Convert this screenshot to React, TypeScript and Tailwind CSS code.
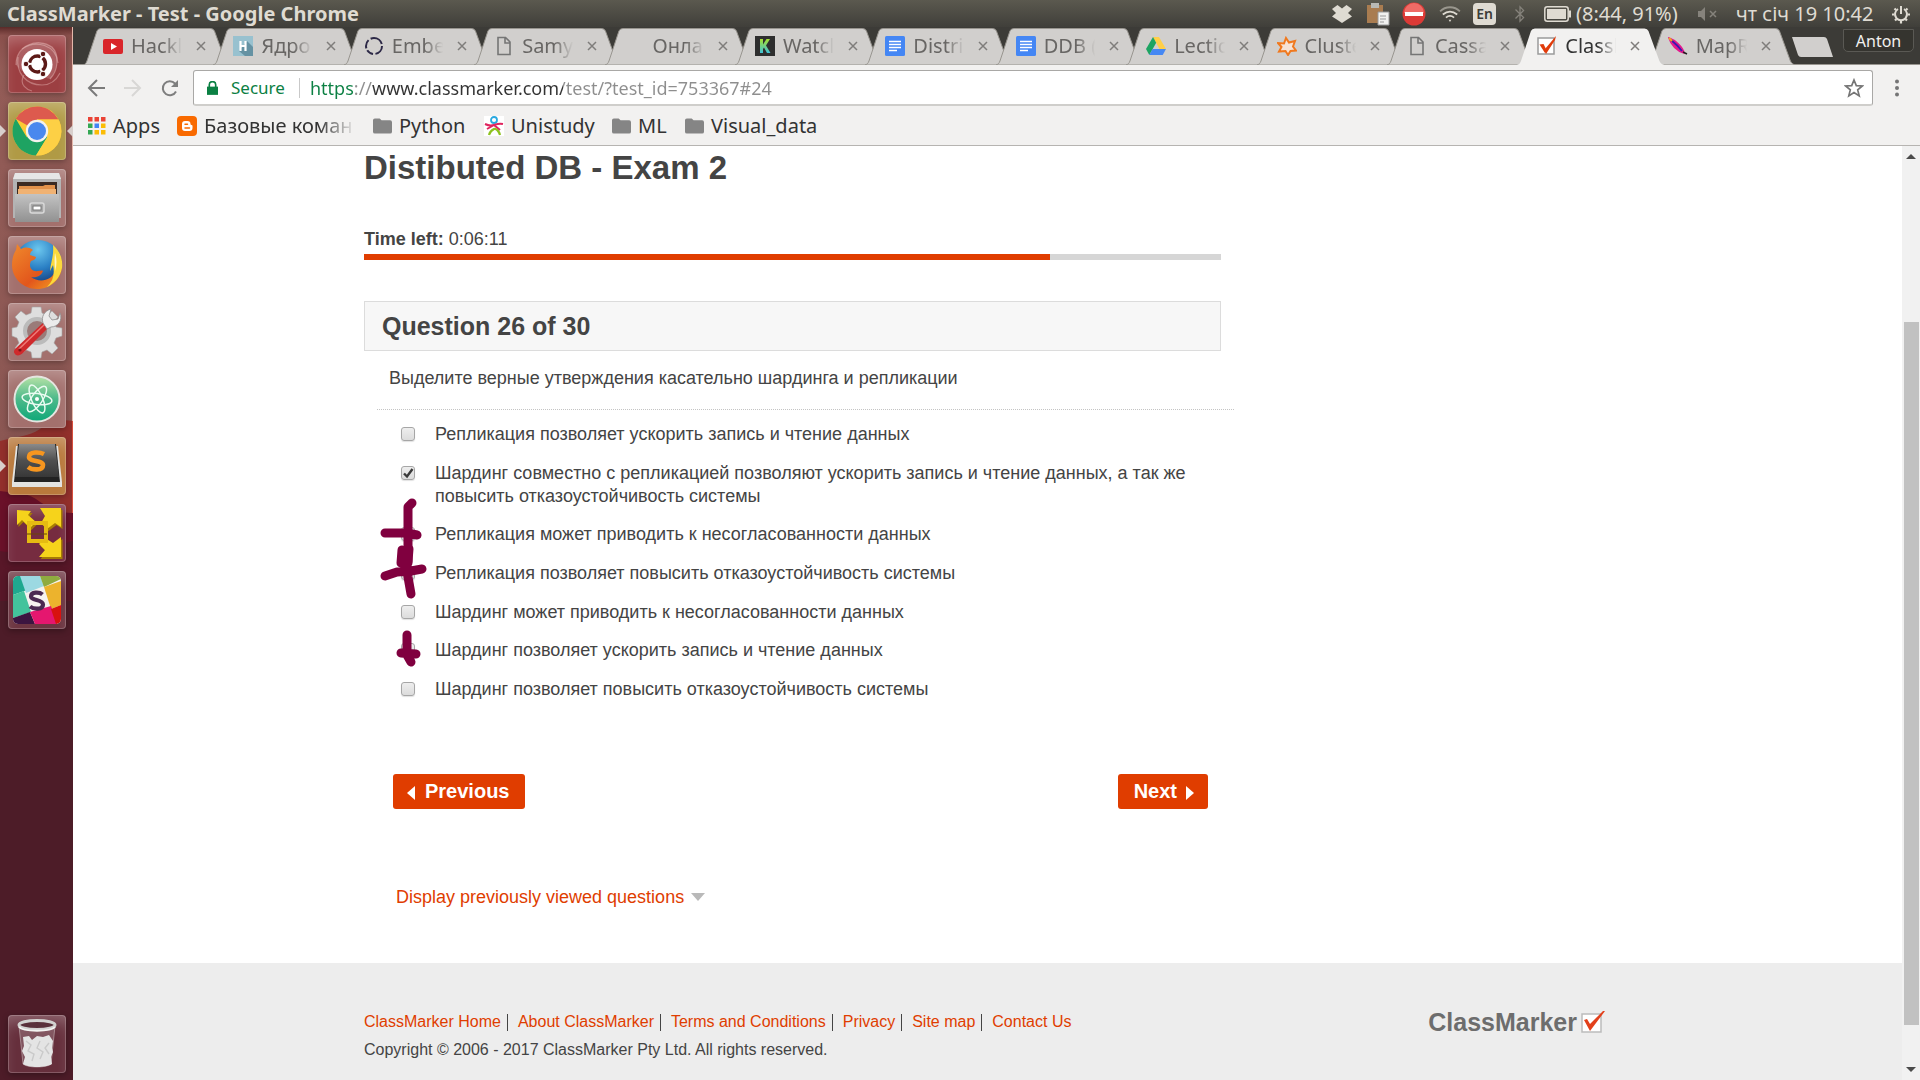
import React, { useState } from "react";

/* ---------- Launcher icons (58-unit canvas) ---------- */

const UbuntuIcon = () => (
  <svg viewBox="0 0 58 58" className="size-full">
    <g fill="none" stroke="#e9b9b5" strokeOpacity=".45" strokeWidth="1.2">
      <path d="M8 30C8 10 30 2 44 12c8 8 6 24-2 32" />
      <path d="M14 14c14-10 34-4 36 14" />
      <path d="M10 22c-2 16 8 28 24 28 8 0 14-4 18-12" />
      <path d="M16 40C10 50 20 55 24 56" />
    </g>
    <path d="M8 30C8 10 30 2 44 12c8 8 6 24-2 32L14 36z" fill="#fff" fillOpacity=".16" />
    <circle cx="29" cy="29.500" r="15.500" fill="#fff" />
    <circle cx="29.500" cy="29" r="8" fill="none" stroke="#5c1a17" strokeWidth="3.400" strokeDasharray="14.500 2.250" strokeDashoffset="-9.500" />
    <g fill="#5c1a17" stroke="#fff" strokeWidth="1">
      <circle cx="18" cy="29" r="2.800" />
      <circle cx="35" cy="19" r="2.800" />
      <circle cx="35" cy="39" r="2.800" />
    </g>
  </svg>
);

const ChromeIcon = () => (
  <svg viewBox="0 0 58 58" className="size-full">
    <circle cx="29" cy="29" r="24.500" fill="#fbc935" />
    <path d="M29 29 7.800 16.700A24.500 24.500 0 0 1 50.500 17.500H29z" fill="#dd5a4e" />
    <path d="M29 29 18.600 35 7.800 16.700A24.500 24.500 0 0 0 28 53.500L39.400 35z" fill="#1ea362" />
    <path d="M29 17.500h21.500A24.500 24.500 0 0 1 28 53.500L39.400 35z" fill="#fdd045" />
    <circle cx="29" cy="29" r="11.200" fill="#f4f2ee" />
    <circle cx="29" cy="29" r="9" fill="#4a88ee" />
  </svg>
);

const FilesIcon = () => (
  <svg viewBox="0 0 58 58" className="size-full">
    <defs>
      <linearGradient id="cab" x1="0" y1="0" x2="0" y2="1">
        <stop offset="0" stopColor="#c3c3c3" />
        <stop offset="1" stopColor="#919191" />
      </linearGradient>
    </defs>
    <path d="M7 4h44l2 6v39H5V10z" fill="#b4b4b4" />
    <path d="M7 4h44l2 6H5z" fill="#e6e6e6" />
    <path d="M9 13h40v12H9z" fill="#3b2a22" />
    <path d="M11 17h24l2-1h10v9H11z" fill="#e2924b" />
    <path d="M10 20h38v5H10z" fill="#f0b273" />
    <path d="M7 25h44v28H7z" fill="url(#cab)" />
    <rect x="22" y="34" width="14" height="10" rx="2" fill="#a9a9a9" stroke="#d9d9d9" strokeWidth="1.500" />
    <rect x="25" y="37" width="8" height="4" fill="#fff" stroke="#777" />
  </svg>
);

const FirefoxIcon = () => (
  <svg viewBox="0 0 58 58" className="size-full">
    <defs>
      <radialGradient id="globe" cx=".5" cy=".2" r=".8">
        <stop offset="0" stopColor="#6cc7ee" />
        <stop offset=".5" stopColor="#2a7fc4" />
        <stop offset="1" stopColor="#12306e" />
      </radialGradient>
      <linearGradient id="fox" x1="0" y1="0" x2="1" y2="1">
        <stop offset="0" stopColor="#f08a2c" />
        <stop offset=".6" stopColor="#e2561c" />
        <stop offset="1" stopColor="#f5a623" />
      </linearGradient>
    </defs>
    <circle cx="30" cy="28" r="24" fill="url(#globe)" />
    <path d="M46 11c6 6 8 12 8 18 0 14-11 24-25 24S4 42 4 29c0-7 2-12 4-15l1-6 4 5c4-2 8-2 12 1-2 1-3 3-3 5l6 2c0 2-2 3-5 4-3 6 1 11 7 10 2 0 4-1 5 0-2 6-9 7-12 6 8 6 21 4 24-6 1-8-1-15-1-24z" fill="url(#fox)" />
    <path d="M45 9c7 6 10 14 9 23-2 9-7 15-15 19 6-6 8-13 6-22l-3 6c1-10 4-15 3-26z" fill="#fbd93d" />
    <path d="M47 17c2 6 2 12 0 18 0-6-1-9 0-18z" fill="#fff8c9" />
  </svg>
);

const SettingsIcon = () => (
  <svg viewBox="0 0 58 58" className="size-full">
    <g fill="#dedede" stroke="#a5a5a5" strokeWidth=".6">
      <path d="M24 4h9l1 6 5 2 5-4 6 6-4 5 2 5 6 1v8l-6 2-2 5 4 5-6 6-5-4-5 2-1 6h-9l-1-6-5-2-5 4-6-6 4-5-2-5-5-2v-8l5-1 2-5-4-5 6-6 5 4 5-2z" />
    </g>
    <circle cx="29" cy="28" r="12" fill="#9a7b79" stroke="#bbb" strokeWidth="4" />
    <path d="M8 45 36 19l5 5-26 26c-3 3-7 3-8 1-2-2-1-4 1-6z" fill="#cf2a2c" />
    <path d="m11 46 26-25" stroke="#ef7b78" strokeWidth="1.500" />
    <path d="M35 20c-2-6 1-12 8-14l-2 7 3 4 6-1 2-6c3 7-2 14-9 14l-4 2z" fill="#ececec" stroke="#8d8d8d" strokeWidth=".8" />
    <circle cx="12" cy="47" r="1.600" fill="#7d1517" />
  </svg>
);

const AtomIcon = () => (
  <svg viewBox="0 0 58 58" className="size-full">
    <defs>
      <linearGradient id="atm" x1="0" y1="0" x2="0" y2="1">
        <stop offset="0" stopColor="#b5e2a6" />
        <stop offset=".5" stopColor="#4cb98a" />
        <stop offset="1" stopColor="#0ea878" />
      </linearGradient>
    </defs>
    <circle cx="29" cy="29" r="22.500" fill="url(#atm)" stroke="#e5e5e0" strokeWidth="2" />
    <g fill="none" stroke="#e9fbf1" strokeWidth="1.500">
      <ellipse cx="29" cy="29" rx="15" ry="5.500" transform="rotate(8 29 29)" />
      <ellipse cx="29" cy="29" rx="15" ry="5.500" transform="rotate(66 29 29)" />
      <ellipse cx="29" cy="29" rx="15" ry="5.500" transform="rotate(124 29 29)" />
    </g>
    <circle cx="29" cy="29" r="2" fill="#fff" />
  </svg>
);

const SublimeIcon = () => (
  <svg viewBox="0 0 58 58" className="size-full">
    <defs>
      <linearGradient id="subl" x1="0" y1="0" x2="0" y2="1">
        <stop offset="0" stopColor="#8a8a8a" />
        <stop offset=".5" stopColor="#4f4f4f" />
        <stop offset="1" stopColor="#383838" />
      </linearGradient>
    </defs>
    <path d="M8 9h42l4 36v5H4v-5z" fill="#e3e3e1" />
    <path d="M10 7h38l4 38H6z" fill="#222" />
    <path d="M11 7h36l4 33H7z" fill="url(#subl)" />
    <path d="M36 17c-4-2-15-3-15 3 0 5 14 3 14 8 0 6-11 5-15 2" fill="none" stroke="#f7961f" strokeWidth="4.600" />
  </svg>
);

const VmwareIcon = () => (
  <svg viewBox="0 0 58 58" className="size-full">
    <g fill="#a57c04" transform="translate(1.500 2)">
      <path d="M9 6l14 1-3 4 8 7-6 6-8-8-5 5z" />
      <path d="M32 4l21 0v19l-6-4-8 6-6-6 4-7z" />
      <path d="M53 33v20H31l6-7-6-6 6-6 8 5z" />
    </g>
    <g fill="#f6d31b">
      <path d="M9 6l14 1-3 4 8 7-6 6-8-8-5 5z" />
      <path d="M32 4l21 0v19l-6-4-8 6-6-6 4-7z" />
      <path d="M53 33v20H31l6-7-6-6 6-6 8 5z" />
    </g>
    <path d="M21 19h17v18H21z" fill="none" stroke="#e5bb12" strokeWidth="4" />
    <path d="M19 30h20" stroke="#6b4708" strokeWidth="1.200" />
  </svg>
);

const SlackIcon = () => (
  <svg viewBox="0 0 58 58" className="size-full">
    <defs>
      <clipPath id="slk">
        <rect x="5" y="5" width="48" height="48" rx="5" />
      </clipPath>
    </defs>
    <g clipPath="url(#slk)">
      <path d="M5 5h48v48H5z" fill="#f5f2ef" />
      <path d="M5 5h9l5 14L5 24z" fill="#1fa88f" />
      <path d="M12 5h20l4 10-18 7z" fill="#9cd9e2" />
      <path d="M32 5h21v3l-17 8z" fill="#8fab3f" />
      <path d="M36 16l17-6v24l-10 4z" fill="#ecb32d" />
      <path d="M5 24l11-4 7 21-18 6z" fill="#43c39c" />
      <path d="M5 47l17-6 5 12H5z" fill="#3c1540" />
      <path d="M22 41l21-6 6 18H27z" fill="#e5176f" />
      <path d="M43 38l10-4v19h-5z" fill="#d8120f" />
    </g>
    <path d="M34.500 23.500c-3-2.500-11.500-3-11.500 2 0 4.500 12 2.500 12 8 0 5.500-9.500 5-13 2" fill="none" stroke="#4b2a52" strokeWidth="4.200" />
  </svg>
);

const TrashIcon = () => (
  <svg viewBox="0 0 58 58" className="size-full">
    <path d="M11 11h36l-4 38c-4 4-24 4-28 0z" fill="#fff" fillOpacity=".18" stroke="#d7c9cc" strokeOpacity=".5" />
    <path d="m15 22 6-1 3 4 5-4 6 1 6-2 4 6-1 7 1 4-2 5 1 7c-6 4-24 4-29 0l2-7-3-6 2-5z" fill="#e4e4e4" />
    <path d="m18 26 5 4-3 6 6 3-2 7m8-20-3 7 6 4-3 7m9-16-4 5 4 6" fill="none" stroke="#cacaca" strokeWidth="1.400" />
    <ellipse cx="29" cy="10" rx="18" ry="4.500" fill="#59303a" stroke="#d2d2d0" strokeWidth="3" />
    <path d="M11 12c4 5 32 5 36 0" fill="none" stroke="#f4f4f2" strokeWidth="2" />
  </svg>
);

/* ---------- Favicons ---------- */

const Fav = ({ children }: { children: React.ReactNode }) => (
  <svg viewBox="0 0 20 20" className="size-5 shrink-0">
    {children}
  </svg>
);

const CheckFav = () => (
  <Fav>
    <rect x="1" y="2" width="16" height="16" fill="#fff" stroke="#9b9b9b" strokeWidth="1.500" />
    <path d="M4 9l4 4L19 0l-1 4-9 14z" fill="#e13c0b" />
    <path d="M2.500 8.500l4-.5 2.500 5-1 4z" fill="#e13c0b" />
  </Fav>
);
const YouTubeFav = () => (
  <Fav>
    <rect y="3" width="20" height="15" rx="2" fill="#d9252a" />
    <path d="M8 7l6 3.500L8 14z" fill="#fff" />
  </Fav>
);
const HabrFav = () => (
  <Fav>
    <path d="M0 0h20v20H0z" fill="#98c1cf" />
    <path d="m14 5 6 6v9H12l-6-5z" fill="#6592a3" />
    <path d="M7.500 5v10M12.500 5v10M7.500 10h5" stroke="#fff" strokeWidth="2.200" />
  </Fav>
);
const RingFav = () => (
  <Fav>
    <circle cx="10" cy="10" r="8" fill="none" stroke="#2c2846" strokeWidth="2" strokeDasharray="11 2.500 7 2 9 2.500 14 2.200" />
  </Fav>
);
const PageFav = () => (
  <Fav>
    <path d="M4 1.500h7.500L16 6v12.500H4zM11 2v5h5" fill="none" stroke="#757575" strokeWidth="1.600" />
  </Fav>
);
const BlankFav = () => <Fav>{null}</Fav>;
const KFav = () => (
  <Fav>
    <defs>
      <linearGradient id="kf" x1="0" y1="0" x2="0" y2="1">
        <stop offset="0" stopColor="#a5e12e" />
        <stop offset="1" stopColor="#3fc1d8" />
      </linearGradient>
    </defs>
    <path d="M0 0h20v20H0z" fill="#2e2e2e" />
    <path d="M5 3h3v5.500L11.500 3H15l-4 6.500L15.500 17H12l-3-5.500-1 1.500v4H5z" fill="url(#kf)" />
  </Fav>
);
const DocsFav = () => (
  <Fav>
    <rect width="20" height="20" rx="1.500" fill="#4486f4" />
    <path d="M4 5.500h12M4 8.500h12M4 11.500h12M4 14.500h8" stroke="#fff" strokeWidth="1.500" />
  </Fav>
);
const DriveFav = () => (
  <Fav>
    <path d="M7 1h6l7 12h-6.500z" fill="#ffcf48" />
    <path d="M7 1l3.200 5.700L3.300 19 0 13z" fill="#1da462" />
    <path d="M6.500 13H20l-3.300 6H3.300z" fill="#4688f4" />
  </Fav>
);
const StarFav = () => (
  <Fav>
    <path d="M9 2l3 4.500 6-1.500-2 5.500 3 4-5.500.5L11 19l-2.500-4-6.500.5 2.500-4.500L1 7l6 .5z" fill="#f6e3d6" stroke="#f0791f" strokeWidth="2" />
  </Fav>
);
const FeatherFav = () => (
  <Fav>
    <path d="M1 2c5 1 12 7 15 15-6-2-12-8-15-15z" fill="#e5178c" />
    <path d="M1 2c6 2 14 9 15 15C9 15 3 9 1 2z" fill="none" stroke="#e5178c" strokeWidth="1.500" />
    <path d="M3 4c5 4 8 7 11 11" stroke="#3a1ab0" strokeWidth="1.800" />
    <path d="M1 2l3 3" stroke="#f3a51d" strokeWidth="2" />
    <path d="M15 16l4 2" stroke="#222" strokeWidth="1.500" />
  </Fav>
);
const FolderIcon = () => (
  <svg viewBox="0 0 20 16" className="h-4 w-[19px] shrink-0">
    <path d="M0 2a2 2 0 0 1 2-2h5l2 2h9a2 2 0 0 1 2 2v10a2 2 0 0 1-2 2H2a2 2 0 0 1-2-2z" fill="#858585" />
  </svg>
);

type Tab = { name: string; title: string; icon: React.ReactNode; active?: boolean };

const tabs: Tab[] = [
  { name: "t1", title: "Hackl", icon: <YouTubeFav /> },
  { name: "t2", title: "Ядро", icon: <HabrFav /> },
  { name: "t3", title: "Embe", icon: <RingFav /> },
  { name: "t4", title: "Samy", icon: <PageFav /> },
  { name: "t5", title: "Онла", icon: <BlankFav /> },
  { name: "t6", title: "Watcl", icon: <KFav /> },
  { name: "t7", title: "Distri", icon: <DocsFav /> },
  { name: "t8", title: "DDB (", icon: <DocsFav /> },
  { name: "t9", title: "Lectic", icon: <DriveFav /> },
  { name: "t10", title: "Cluste", icon: <StarFav /> },
  { name: "t11", title: "Cassa", icon: <PageFav /> },
  { name: "t12", title: "Classl", icon: <CheckFav />, active: true },
  { name: "t13", title: "MapR", icon: <FeatherFav /> },
];

const TabItem = ({ tab }: { tab: Tab }) => (
  <div className={tab.active ? "relative z-10 min-w-0 flex-1" : "relative min-w-0 flex-1"}>
    <svg viewBox="0 0 148 37" preserveAspectRatio="none" className="absolute left-0 top-0 h-[37px] w-[calc(100%+17px)]">
      <path
        d="M0 37C3 36 3 35 4 33L14 3Q15 .5 18 .5H128Q131 .5 132 3L143 33C144 35 145 36 148 37z"
        fill={tab.active ? "#f2f1f0" : "#d1cfcd"}
        stroke={tab.active ? "none" : "#98958f"}
      />
    </svg>
    <div className="relative flex h-9 items-center pl-5">
      {tab.icon}
      <button
        type="button"
        role="tab"
        aria-selected={!!tab.active}
        className={
          tab.active
            ? "ml-2 w-[54px] overflow-hidden whitespace-nowrap text-left text-xl leading-7 text-[#333] [mask-image:linear-gradient(to_right,#000_60%,transparent_95%)]"
            : "ml-2 w-[54px] overflow-hidden whitespace-nowrap text-left text-xl leading-7 text-[#686664] [mask-image:linear-gradient(to_right,#000_60%,transparent_95%)]"
        }
      >
        {tab.title}
      </button>
      <button type="button" aria-label="Close tab" className="ml-[11px] shrink-0">
        <svg viewBox="0 0 10 10" className="size-2.5">
          <path d="M1 1l8 8M9 1 1 9" stroke="#7f7d7b" strokeWidth="1.500" />
        </svg>
      </button>
    </div>
  </div>
);

/* ---------- Top system panel ---------- */

const Indicators = () => (
  <div className="flex items-center text-xl leading-6 text-[#dfdbd2]">
    <svg viewBox="0 0 20 18" className="h-[18px] w-5 fill-[#dfdbd2]">
      <path d="M5.500 0 10 3.500 14.500 0 20 4l-4 4 4 3.500-4 2.500-6 4-6-4-4-2.500L4 8 0 4z" />
    </svg>
    <svg viewBox="0 0 24 24" className="ml-3.5 size-6">
      <path d="M1 3h16v18H1z" fill="#a97c50" />
      <path d="M5 1h8v5H5z" fill="#b9b9b5" />
      <path d="M12 10h11v13H12z" fill="#f1f1ef" stroke="#999" />
      <path d="M14 14h6M14 17h6M14 20h4" stroke="#999" />
    </svg>
    <svg viewBox="0 0 24 24" className="ml-3 size-6">
      <circle cx="12" cy="12" r="11.500" fill="#dc3a36" />
      <path d="M2 11a10 10 0 0 1 20 0z" fill="#ef6b66" />
      <path d="M3 10h18v4H3z" fill="#fff" />
    </svg>
    <svg viewBox="0 0 24 20" className="ml-[13px] h-[18px] w-[22px]" fill="none" stroke="#dfdbd2" strokeWidth="2">
      <path d="M1 7c6-6 16-6 22 0" strokeOpacity=".5" />
      <path d="M4 10.500c5-4 11-4 16 0M7.500 14c3-2.500 6-2.500 9 0" />
      <path d="M10.500 16.500h3L12 19z" fill="#dfdbd2" stroke="none" />
    </svg>
    <span className="ml-3 flex h-[22px] w-[23px] items-center justify-center rounded-sm bg-[#dfdbd2] text-sm font-semibold text-[#3c3b37]">En</span>
    <svg viewBox="0 0 12 20" className="ml-[18px] h-[18px] w-3" fill="none" stroke="#86837c" strokeWidth="1.400">
      <path d="M1 5l9 9-4 4V2l4 4-9 9" />
    </svg>
    <svg viewBox="0 0 28 16" className="ml-[18px] h-4 w-7">
      <rect x=".8" y=".8" width="23.400" height="14.400" rx="2.500" fill="none" stroke="#dfdbd2" strokeWidth="1.500" />
      <path d="M3 3h19v10H3z" fill="#dfdbd2" />
      <path d="M25 4.500h2v7h-2z" fill="#dfdbd2" />
    </svg>
    <span className="ml-1 w-[108px] whitespace-nowrap">(8:44, 91%)</span>
    <svg viewBox="0 0 20 14" className="ml-3.5 h-3.5 w-5">
      <path d="M0 4h3l4-4v14l-4-4H0z" fill="#86837c" />
      <path d="M12 4l6 6M18 4l-6 6" stroke="#86837c" strokeWidth="1.500" />
    </svg>
    <time className="ml-[18px] w-[141px] whitespace-nowrap">чт січ 19 10:42</time>
    <svg viewBox="0 0 20 20" className="ml-3.5 mr-[9px] size-5" fill="none" stroke="#dfdbd2">
      <path d="M7 5a6 6 0 1 0 6 0M10 2v8" strokeWidth="2" />
      <path d="M3.500 4.500l1.500 1.500M16.500 4.500 15 6M1 10.500h2.500M16.500 10.500H19M4 16.500 5.500 15M16 16.500 14.500 15M10 17v2.500" strokeWidth="2.200" />
    </svg>
  </div>
);

/* ---------- Launcher ---------- */

const launcher = [
  { label: "Dash", icon: <UbuntuIcon />, tile: "bg-[#9c3f42]" },
  { label: "Google Chrome", icon: <ChromeIcon />, tile: "bg-[#b09a45]", running: true, focused: true },
  { label: "Files", icon: <FilesIcon />, tile: "bg-[#a3706d]" },
  { label: "Firefox", icon: <FirefoxIcon />, tile: "bg-[#a3706d]" },
  { label: "System Settings", icon: <SettingsIcon />, tile: "bg-[#a3706d]" },
  { label: "Atom", icon: <AtomIcon />, tile: "bg-[#a3706d]" },
  { label: "Sublime Text", icon: <SublimeIcon />, tile: "bg-[#b9793c]", running: true },
  { label: "VMware", icon: <VmwareIcon />, tile: "bg-[#762c40]" },
  { label: "Slack", icon: <SlackIcon />, tile: "bg-[#6d3642]" },
];

const Tile = ({ label, icon, tile, running, focused }: { label: string; icon: React.ReactNode; tile: string; running?: boolean; focused?: boolean }) => (
  <div className="relative flex justify-center">
    {running && <span className="absolute left-0 top-[23px] border-y-[6px] border-l-[6px] border-y-transparent border-l-[#d8cfcc]" />}
    <button type="button" aria-label={label} className={`size-[58px] overflow-hidden rounded-[4px] shadow-[inset_0_0_0_1px_rgba(255,255,255,0.2),inset_0_12px_16px_-6px_rgba(255,255,255,0.28),0_2px_6px_rgba(0,0,0,0.3)] ${tile}`}>
      {icon}
    </button>
    {focused && <span className="absolute right-0 top-[23px] border-y-[6px] border-r-[6px] border-y-transparent border-r-[#d8cfcc]" />}
  </div>
);

const Launcher = () => (
  <nav aria-label="Launcher" className="relative flex w-[73px] shrink-0 flex-col justify-between bg-[#4d1c28] pb-[7px] pt-2">
    <svg viewBox="0 0 73 1053" preserveAspectRatio="none" className="absolute inset-0 h-full w-full">
      <defs>
        <linearGradient id="wall" x1="0" y1="0" x2="0" y2="1">
          <stop offset="0" stopColor="#5a2a28" />
          <stop offset=".02" stopColor="#8a504c" />
          <stop offset=".1" stopColor="#935c57" />
          <stop offset="1" stopColor="#8b5753" />
        </linearGradient>
      </defs>
      <path d="M0 0h73v420H0z" fill="url(#wall)" />
      <path d="M0 414c14-4 28-4 40-12 12-8 22-10 33-8v100H0z" fill="#93302c" />
      <path d="M0 464c10 2 24 0 36 8 10 8 24 14 37 14v60H0z" fill="#6a1129" />
      <path d="M0 524c18 4 30-6 44-4 12 2 20-4 29-6v60H0z" fill="#581728" />
      <path d="M72.500 0v394" stroke="#e5b8ab" />
      <path d="M72.500 394v92" stroke="#d8503f" />
    </svg>
    <div className="relative flex flex-col gap-[9px]">
      {launcher.map((l) => (
        <Tile key={l.label} {...l} />
      ))}
    </div>
    <Tile label="Trash" icon={<TrashIcon />} tile="bg-[#662f3c]" />
  </nav>
);

/* ---------- Browser chrome ---------- */

const Toolbar = () => {
  const [url, setUrl] = useState("https://www.classmarker.com/test/?test_id=753367#24");
  return (
    <div className="flex items-center pb-1 pl-[13px] pr-[17px] pt-[5px]">
      <button type="button" aria-label="Back" className="mr-[17px]">
        <svg viewBox="0 0 20 18" className="h-[18px] w-5" fill="none" stroke="#7a7a7a" strokeWidth="2">
          <path d="M19 9H3M11 1 3 9l8 8" />
        </svg>
      </button>
      <button type="button" aria-label="Forward" className="mr-[17px]">
        <svg viewBox="0 0 20 18" className="h-[18px] w-5" fill="none" stroke="#d8d7d5" strokeWidth="2">
          <path d="M1 9h16M9 1l8 8-8 8" />
        </svg>
      </button>
      <button type="button" aria-label="Reload" className="mr-[13px]">
        <svg viewBox="0 0 20 20" className="size-5">
          <path d="M16 13.500A7 7 0 1 1 15 5.500L17 7" fill="none" stroke="#7e7e7e" strokeWidth="2" />
          <path d="M18 2v7h-7z" fill="#7e7e7e" />
        </svg>
      </button>
      <div className="flex h-9 flex-1 items-center rounded-[3px] border border-b-2 border-[#a9a8a6] border-b-[#cfcecb] bg-white pl-[13px] pr-2">
        <svg viewBox="0 0 12 15" className="h-3.5 w-[11px]">
          <path d="M0 6h12v9H0z" fill="#0b8043" />
          <path d="M2.500 7V4a3.500 3.500 0 0 1 7 0v3" fill="none" stroke="#0b8043" strokeWidth="1.800" />
        </svg>
        <span className="ml-[13px] w-[56px] whitespace-nowrap text-[17px] text-[#0b8043]">Secure</span>
        <span className="ml-3 mr-2.5 h-5 w-px bg-[#c9c9c9]" />
        <input
          aria-label="Address"
          value={url}
          onChange={(e) => setUrl(e.target.value)}
          className="min-w-0 flex-1 bg-[linear-gradient(to_right,#0b8043_44px,#8e8e8e_44px,#8e8e8e_62px,#333_62px,#333_253px,#8e8e8e_253px)] bg-clip-text text-lg text-transparent caret-black outline-none"
        />
        <button type="button" aria-label="Bookmark this page">
          <svg viewBox="0 0 20 20" className="size-5" fill="none" stroke="#757575" strokeWidth="1.700">
            <path d="M10 2l2.300 5.600 6 .4-4.600 3.900 1.500 6L10 14.600 4.800 17.900l1.500-6L1.700 8l6-.4z" />
          </svg>
        </button>
      </div>
      <button type="button" aria-label="Menu" className="ml-[18px]">
        <svg viewBox="0 0 12 20" className="h-5 w-3 fill-[#757575]">
          <circle cx="6" cy="3.500" r="2" />
          <circle cx="6" cy="10" r="2" />
          <circle cx="6" cy="16.500" r="2" />
        </svg>
      </button>
    </div>
  );
};

const appColors = ["#ea4335", "#ea4335", "#ea4335", "#34a853", "#4285f4", "#fbbc05", "#34a853", "#fbbc05", "#fbbc05"];

const Bookmark = ({ icon, children, className }: { icon: React.ReactNode; children: React.ReactNode; className?: string }) => (
  <a href="#" className="flex items-center gap-[7px] whitespace-nowrap">
    {icon}
    <span className={className}>{children}</span>
  </a>
);

const Bookmarks = () => (
  <div className="flex h-[35px] items-center gap-[17px] pb-[3px] pl-[15px] text-xl text-[#333]">
    <Bookmark
      icon={
        <svg viewBox="0 0 18 18" className="size-[18px]">
          {appColors.map((c, i) => (
            <rect key={i} x={(i % 3) * 6.5} y={Math.floor(i / 3) * 6.5} width="4.500" height="4.500" fill={c} />
          ))}
        </svg>
      }
      className="w-[47px]"
    >
      Apps
    </Bookmark>
    <Bookmark
      icon={
        <svg viewBox="0 0 20 20" className="size-5">
          <rect width="20" height="20" rx="4" fill="#f96a00" />
          <path d="M8 5h2.500a3 3 0 0 1 3 3q0 1 1 1t1 1v2a3 3 0 0 1-3 3H8a3 3 0 0 1-3-3V8a3 3 0 0 1 3-3z" fill="#fff" />
          <path d="M8 8.200h2.500M8 12h4.500" stroke="#f96a00" strokeWidth="1.500" strokeLinecap="round" />
        </svg>
      }
      className="w-[152px] overflow-hidden [mask-image:linear-gradient(to_right,#000_75%,transparent)]"
    >
      Базовые коман
    </Bookmark>
    <Bookmark icon={<FolderIcon />} className="w-[68px]">Python</Bookmark>
    <Bookmark
      icon={
        <svg viewBox="0 0 20 20" className="size-5">
          <path d="M0 0h20v20H0z" fill="#fff" />
          <circle cx="10" cy="4" r="3" fill="none" stroke="#2aa9e0" strokeWidth="1.800" />
          <path d="M1 8c4 2 6 2 9 1s5-2 9-1M10 9l-7 4M10 9l6 5" fill="none" stroke="#e0245e" strokeWidth="2" />
          <path d="M5 19c1-4 3-5 5-6s5 2 6 6" fill="none" stroke="#8dc21f" strokeWidth="2.200" />
        </svg>
      }
      className="w-[84px]"
    >
      Unistudy
    </Bookmark>
    <Bookmark icon={<FolderIcon />} className="w-[30px]">ML</Bookmark>
    <Bookmark icon={<FolderIcon />}>Visual_data</Bookmark>
  </div>
);

/* ---------- Test page ---------- */

const initialAnswers = [
  { text: "Репликация позволяет ускорить запись и чтение данных", checked: false },
  { text: "Шардинг совместно с репликацией позволяют ускорить запись и чтение данных, а так же повысить отказоустойчивость системы", checked: true },
  { text: "Репликация может приводить к несогласованности данных", checked: false },
  { text: "Репликация позволяет повысить отказоустойчивость системы", checked: false },
  { text: "Шардинг может приводить к несогласованности данных", checked: false },
  { text: "Шардинг позволяет ускорить запись и чтение данных", checked: false },
  { text: "Шардинг позволяет повысить отказоустойчивость системы", checked: false },
];

const Answers = () => {
  const [answers, setAnswers] = useState(initialAnswers);
  const toggle = (i: number) => setAnswers(answers.map((a, n) => (n === i ? { ...a, checked: !a.checked } : a)));
  return (
    <div className="relative mt-[13px]">
      <ul className="flex min-h-[278px] flex-col justify-between pl-[37px] pr-6">
        {answers.map((a, i) => (
          <li key={a.text}>
            <label className="flex items-start gap-5 leading-[23px]">
              <span className="relative mt-1 size-3.5 shrink-0">
                <input
                  type="checkbox"
                  checked={a.checked}
                  onChange={() => toggle(i)}
                  className="peer block size-3.5 appearance-none rounded-[3px] border border-[#a6a6a6] bg-linear-to-b from-[#eeeeee] to-[#dcdcdc] shadow-[0_1px_1px_rgba(0,0,0,0.12)]"
                />
                <svg viewBox="0 0 14 14" className="pointer-events-none absolute inset-0 hidden size-3.5 peer-checked:block">
                  <path d="M3 7.500l3 3L11.500 3" fill="none" stroke="#3a3a3a" strokeWidth="2.400" />
                </svg>
              </span>
              <span>{a.text}</span>
            </label>
          </li>
        ))}
      </ul>
      <svg viewBox="0 0 60 180" className="pointer-events-none absolute left-[13px] top-[72px] h-[180px] w-[60px]" fill="none" stroke="#80003f" strokeWidth="9" strokeLinecap="round" strokeLinejoin="round">
        <path d="M35 8 31 12 31 68M8 38 30 38 40 40" />
        <path d="M25 55 24 68 31 66 32 54M8 81 20 77 34 76 45 74M30 72 31 82 34 99" />
        <path d="M30 140 30 160 34 167M24 158 39 159" />
      </svg>
    </div>
  );
};

const footerLinks = ["ClassMarker Home", "About ClassMarker", "Terms and Conditions", "Privacy", "Site map", "Contact Us"];

const TestPage = () => (
  <div className="flex min-w-0 flex-1 flex-col bg-white font-['Liberation_Sans',Arial,sans-serif] text-lg text-[#444]">
    <main className="mx-auto w-full max-w-[1247px]">
      <div className="w-[857px]">
        <h1 className="mt-0.5 text-[33px] font-bold leading-10">Distibuted DB - Exam 2</h1>
        <p className="mt-[39px] leading-6">
          <b>Time left:</b> 0:06:11
        </p>
        <div className="mt-[3px] h-1.5 bg-[#d6d6d6]">
          <div className="h-full w-4/5 bg-[#e03d00]" />
        </div>
        <h2 className="mt-[41px] border border-[#dcdcdc] bg-[#f7f7f7] px-[17px] py-2 text-[25px] font-bold leading-8">Question 26 of 30</h2>
        <p className="ml-[25px] mt-[15px] leading-6">Выделите верные утверждения касательно шардинга и репликации</p>
        <div className="-mr-[13px] ml-[13px] mt-[19px] border-t border-dotted border-[#c4c4c4]" />
        <Answers />
        <div className="mt-[73px] flex justify-between pl-[29px] pr-[13px] text-xl font-bold leading-[35px] text-white">
          <button type="button" className="flex items-center gap-2.5 rounded-[3px] bg-[#e03d00] pl-3.5 pr-4">
            <span className="mt-[3px] border-y-[7px] border-r-8 border-y-transparent border-r-white" />
            Previous
          </button>
          <button type="button" className="flex items-center gap-[9px] rounded-[3px] bg-[#e03d00] pl-4 pr-3.5">
            Next
            <span className="mt-[3px] border-y-[7px] border-l-8 border-y-transparent border-l-white" />
          </button>
        </div>
        <a href="#" className="ml-8 mt-[76px] flex items-center gap-[7px] leading-6 text-[#e03d00]">
          Display previously viewed questions
          <span className="border-x-[7px] border-t-8 border-x-transparent border-t-[#b9b9b9]" />
        </a>
      </div>
    </main>
    <footer className="mt-[54px] flex-1 bg-[#ededed]">
      <div className="mx-auto flex w-full max-w-[1247px] justify-between pr-[6px] pt-[47px]">
        <div className="text-base leading-6">
          <ul className="flex">
            {footerLinks.map((l, i) => (
              <li key={l} className="flex items-center">
                {i > 0 && <span className="ml-1.5 mr-2.5 h-[17px] w-px bg-[#444]" />}
                <a href="#" className="text-[#e03d00]">{l}</a>
              </li>
            ))}
          </ul>
          <p className="mt-1">Copyright © 2006 - 2017 ClassMarker Pty Ltd. All rights reserved.</p>
        </div>
        <div className="flex h-6 items-center gap-1 text-[25px] font-bold text-[#6d6d6d]">
          ClassMarker
          <svg viewBox="0 0 24 24" className="size-6">
            <path d="M1 4h19v18H1z" fill="#fff" stroke="#bcbcbc" strokeWidth="1.500" />
            <path d="M3 10l3-1 3 5L22 1h2L9 21z" fill="#e2401b" />
          </svg>
        </div>
      </div>
    </footer>
  </div>
);

const Scrollbar = () => (
  <div aria-hidden="true" className="flex w-[18px] shrink-0 flex-col items-center bg-[#f1f1f1] py-2">
    <span className="border-x-[5px] border-b-[5px] border-x-transparent border-b-[#4b4b4b]" />
    <span className="mb-[42px] mt-[163px] w-[15px] flex-1 bg-[#c1c1c1]" />
    <span className="border-x-[5px] border-t-[5px] border-x-transparent border-t-[#4b4b4b]" />
  </div>
);

export default function App() {
  return (
    <div className="flex h-screen flex-col overflow-hidden font-['Noto_Sans',sans-serif]">
      <header className="flex h-[27px] shrink-0 items-center justify-between bg-linear-to-b from-[#5b594f] to-[#403f3a] pl-[7px]">
        <span className="whitespace-nowrap text-xl font-bold leading-6 text-[#dfdbd2]">ClassMarker - Test - Google Chrome</span>
        <Indicators />
      </header>
      <div className="flex min-h-0 flex-1">
        <Launcher />
        <div className="flex min-w-0 flex-1 flex-col bg-[#f2f1f0]">
          <div className="flex h-[38px] border-b border-[#98958f] bg-[#3c3b37] pl-2.5 pt-px">
            <div role="tablist" className="flex flex-1">
              {tabs.map((t) => (
                <TabItem key={t.name} tab={t} />
              ))}
            </div>
            <button type="button" aria-label="New tab" className="ml-[13px] mt-[9px] self-start">
              <svg viewBox="0 0 42 20" className="h-5 w-[42px]">
                <path d="M1 0h32q2 0 3 2l6 18H10q-2 0-3-2z" fill="#d1cfcd" />
              </svg>
            </button>
            <button type="button" className="ml-2.5 mr-1.5 mt-px h-[23px] w-[71px] rounded-b-[5px] border border-[#5a5954] bg-[#35342f] text-base leading-5 text-[#f2f1f0]">
              Anton
            </button>
          </div>
          <Toolbar />
          <Bookmarks />
          <div className="flex min-h-0 flex-1 border-t border-[#b6b4b1]">
            <TestPage />
            <Scrollbar />
          </div>
        </div>
      </div>
    </div>
  );
}
